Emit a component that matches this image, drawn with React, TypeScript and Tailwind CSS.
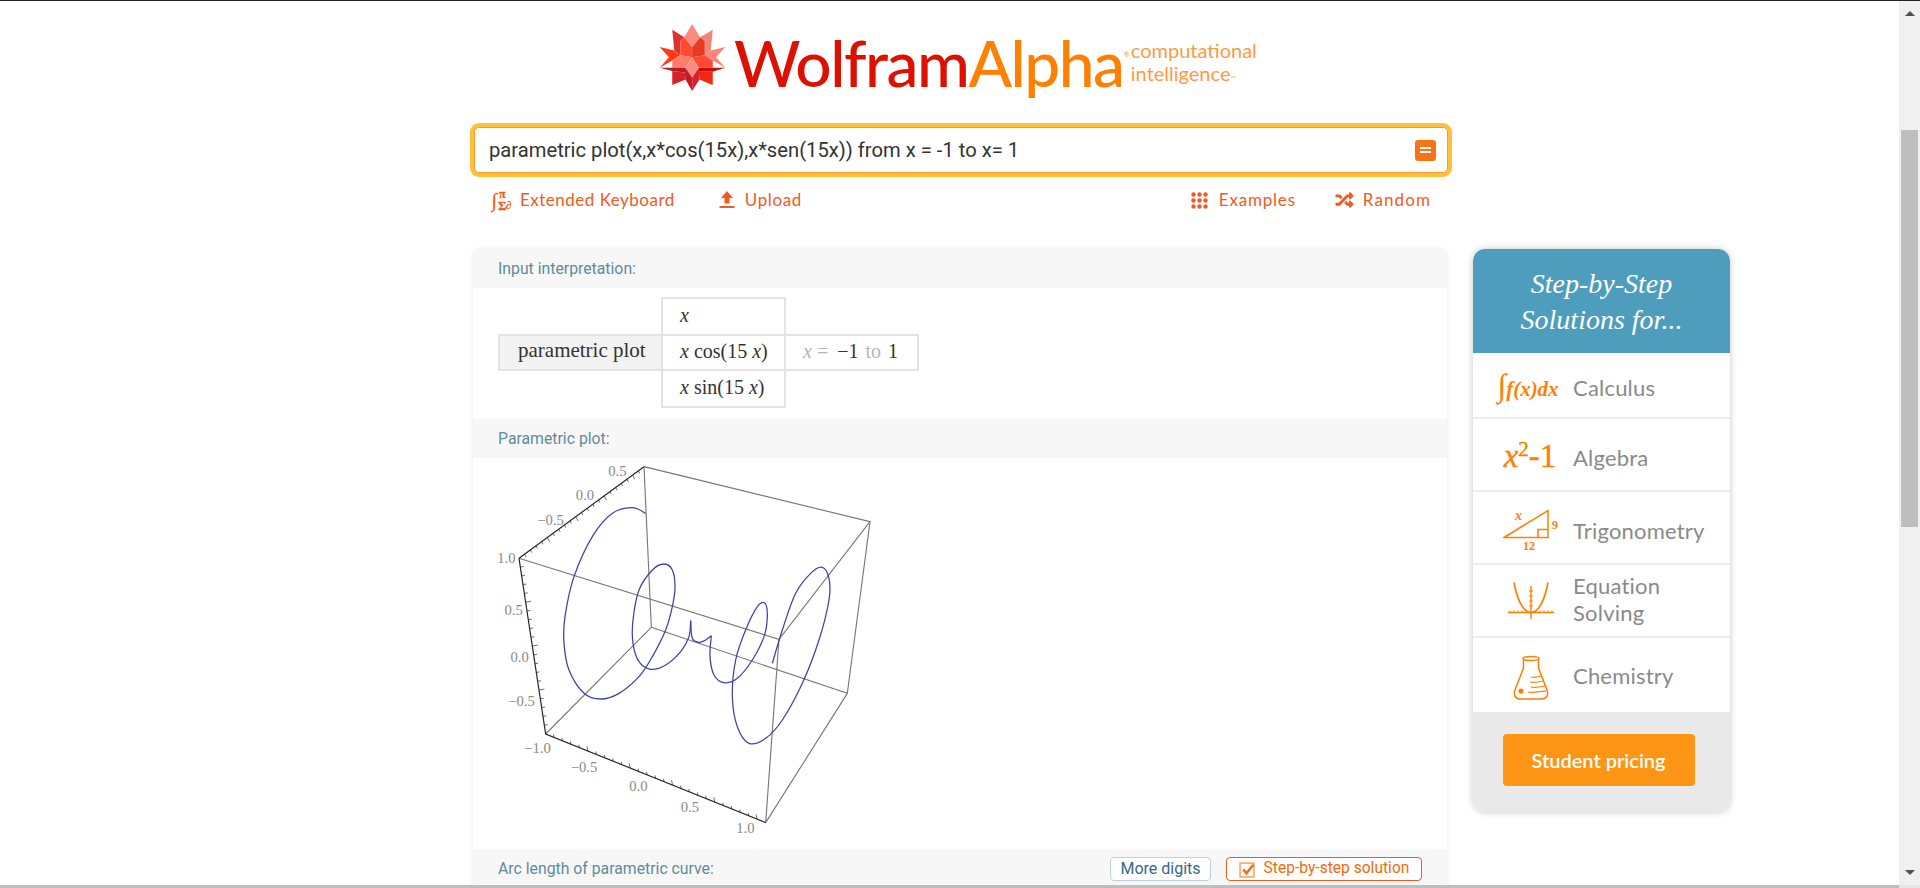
import { FaRandom } from 'react-icons/fa';

const sans = 'font-["Lato",sans-serif]';

// curve traced from the plot, one list per smooth stretch between cusps
const curveParts: number[][][] = [
  [[470,190],[430,173],[370,190],[310,260],[255,380],[228,500],[225,580],[240,660],[285,730],[335,747],[390,730],[450,680],[490,620],[530,540],[550,470],[558,410],[550,360],[525,342],[490,360],[450,420],[432,510],[432,580],[450,635],[485,658],[530,645],[575,605],[600,560],[605,512]],
  [[605,512],[610,565],[630,577],[650,570],[667,557]],
  [[667,557],[663,620],[675,675],[705,698],[745,685],[790,630],[825,560],[835,500],[828,460],[805,470],[770,540],[740,630],[730,740],[745,830],[780,880],[830,865],[880,810],[940,700],[990,570],[1020,450],[1020,385],[1000,352],[965,370],[920,430],[880,540],[850,640]],
];

function smoothPath(pts: number[][]) {
  let d = `M${pts[0][0]} ${pts[0][1]}`;
  for (let i = 0; i < pts.length - 1; i++) {
    const p0 = pts[Math.max(i - 1, 0)];
    const p1 = pts[i];
    const p2 = pts[i + 1];
    const p3 = pts[Math.min(i + 2, pts.length - 1)];
    const c1x = p1[0] + (p2[0] - p0[0]) / 6;
    const c1y = p1[1] + (p2[1] - p0[1]) / 6;
    const c2x = p2[0] - (p3[0] - p1[0]) / 6;
    const c2y = p2[1] - (p3[1] - p1[1]) / 6;
    d += ` C${c1x} ${c1y} ${c2x} ${c2y} ${p2[0]} ${p2[1]}`;
  }
  return d;
}

function ticks(a: number[], b: number[], n: number, dx: number, dy: number) {
  let d = '';
  for (let i = 1; i < n; i++) {
    const x = a[0] + ((b[0] - a[0]) * i) / n;
    const y = a[1] + ((b[1] - a[1]) * i) / n;
    const l = i % 5 === 0 ? 1.6 : 1;
    d += `M${x} ${y} l${dx * l} ${dy * l} `;
  }
  return d;
}

const plotLabels = [
  { x: 385, y: 78, t: '0.5' }, { x: 288, y: 150, t: '0.0' }, { x: 185, y: 224, t: '−0.5' },
  { x: 52, y: 338, t: '1.0' }, { x: 74, y: 494, t: '0.5' }, { x: 92, y: 637, t: '0.0' },
  { x: 98, y: 768, t: '−0.5' }, { x: 146, y: 910, t: '−1.0' }, { x: 285, y: 966, t: '−0.5' },
  { x: 448, y: 1023, t: '0.0' }, { x: 603, y: 1086, t: '0.5' }, { x: 769, y: 1150, t: '1.0' },
];

function ParametricPlot() {
  return (
    <svg viewBox="0 24 1200 1173" className="ml-[16px] block h-[391px] w-[400px]">
      <g fill="none" stroke="#777" strokeWidth="3.4">
        <path d="M465 50 L1143 215 L870 568 L90 325" />
        <path d="M465 50 L487 532 L170 852 M487 532 L1075 730 L1143 215 M1075 730 L830 1118 L870 568" />
      </g>
      <g fill="none" stroke="#222" strokeWidth="3.5">
        <path d="M90 325 L465 50 M90 325 L170 852 L830 1118" />
        <path strokeWidth="2" d={ticks([90,325],[465,50],22,4,8) + ticks([90,325],[170,852],20,10,-2) + ticks([170,852],[830,1118],26,-2,-9)} />
      </g>
      <g fill="none" stroke="#3f42a8" strokeWidth="3.8" strokeLinejoin="miter">
        {curveParts.map((pts, i) => <path key={i} d={smoothPath(pts)} />)}
      </g>
      <g fill="#888" fontFamily="'Liberation Serif',serif" fontSize="44" textAnchor="middle">
        {plotLabels.map(l => <text key={l.x} x={l.x} y={l.y}>{l.t}</text>)}
      </g>
    </svg>
  );
}

function WolframStar() {
  return (
    <svg viewBox="25 25 208 208" className="h-[69px] w-[69px] shrink-0">
      <polygon points="128,28 152,68 128,98 104,68" fill="#fb8d7f" />
      <polygon points="68,45 104,68 92,80 92,122 74,108" fill="#dc352f" />
      <polygon points="190,45 152,68 166,80 166,122 184,108" fill="#f0857a" />
      <polygon points="104,68 128,98 128,128 92,122 92,80" fill="#ff4c30" />
      <polygon points="152,68 128,98 128,128 166,122 166,80" fill="#e63a22" />
      <polygon points="30,97 74,108 92,122 68,138 30,160 58,128" fill="#ff3a14" />
      <polygon points="228,97 184,108 166,122 190,138 228,160 200,128" fill="#fb8778" />
      <polygon points="92,122 128,128 108,160 68,160 68,138" fill="#fb7d6c" />
      <polygon points="166,122 128,128 148,160 190,160 190,138" fill="#ff4a35" />
      <polygon points="128,128 148,160 128,190 108,160" fill="#fb8d7f" />
      <polygon points="30,160 108,160 110,175 68,170" fill="#b81c1f" />
      <polygon points="228,160 148,160 148,172 190,172" fill="#c90f08" />
      <polygon points="68,170 110,175 108,195 68,212" fill="#d8222a" />
      <polygon points="190,172 148,172 150,195 190,212" fill="#f02a0e" />
      <polygon points="108,160 128,190 128,230 108,195" fill="#c31a25" />
      <polygon points="148,160 128,190 128,230 150,195" fill="#d92030" />
    </svg>
  );
}

function KeyboardIcon() {
  return (
    <svg viewBox="0 -4 24 30" className="h-[30px] w-[24px] -mr-[3px]" fill="#f15a22" stroke="#f15a22" strokeWidth="0.3" fontFamily="'Liberation Serif',serif" fontWeight="700">
      <text x="0.5" y="18" fontSize="20">∫</text>
      <text x="8" y="9" fontSize="12">π</text>
      <text x="7" y="21" fontSize="13">Σ</text>
      <text x="15" y="20" fontSize="11">∂</text>
    </svg>
  );
}

function UploadIcon() {
  return (
    <svg viewBox="0 0 16 18" className="h-[18px] w-[16px]" fill="#f15a22">
      <path d="M8 0 L14 7 H10.5 V12.5 H5.5 V7 H2 Z" />
      <rect x="0.5" y="15" width="15" height="2" />
    </svg>
  );
}

function DotsIcon() {
  const dots = [2.5, 8.5, 14.5];
  return (
    <svg viewBox="0 0 17 17" className="h-[17px] w-[17px]" fill="#f15a22">
      {dots.map(y => dots.map(x => <circle key={`${x}-${y}`} cx={x} cy={y} r="2.2" />))}
    </svg>
  );
}

function ToolLink({ icon, label, extra }: { icon: React.ReactNode; label: string; extra: string }) {
  return (
    <a className={`flex items-center ${extra} ${sans} text-[17px] text-[#f15a22]`}>
      {icon}
      <span>{label}</span>
    </a>
  );
}

function PodHeader({ title, children }: { title: string; children?: React.ReactNode }) {
  return (
    <div className="flex items-center justify-between bg-[#f7f7f7] pr-[25px] pl-[25px] font-['Roboto',sans-serif] text-[15.8px] text-[#5f8b9d]">
      <span>{title}</span>
      {children}
    </div>
  );
}

function InputTable() {
  const serif = "font-['Liberation_Serif',serif] text-[20px] text-[#333]";
  const line = 'border-2 border-[#e3e3e3]';
  return (
    <div className={`ml-[25px] grid h-[111px] w-[421px] grid-cols-[163px_125px_133px] grid-rows-[37px_37px_37px] ${serif}`}>
      <div className={`col-start-2 row-start-1 flex items-center ${line} border-b-0 pb-[4px] pl-[17px]`}><i>x</i></div>
      <div className={`col-start-1 row-start-2 flex items-center ${line} border-r-0 bg-[#f2f2f2] pb-[3px] pl-[18px] text-[21px] whitespace-nowrap`}>parametric plot</div>
      <div className={`col-start-2 row-start-2 flex items-center ${line} bg-white pb-[3px] pl-[17px] whitespace-nowrap`}><i>x</i>&nbsp;cos(15&nbsp;<i>x</i>)</div>
      <div className={`col-start-3 row-start-2 flex items-center ${line} border-l-0 pb-[3px] pl-[17px] whitespace-nowrap`}>
        <span className="mr-[9px] text-[#b5b5b5]"><i>x</i>&nbsp;=</span>−1<span className="mx-[7px] text-[#b5b5b5]">to</span>1
      </div>
      <div className={`col-start-2 row-start-3 flex items-center ${line} border-t-0 pb-[3px] pl-[17px] whitespace-nowrap`}><i>x</i>&nbsp;sin(15&nbsp;<i>x</i>)</div>
    </div>
  );
}

const topics = [
  {
    h: 'h-[66px]',
    label: 'Calculus',
    pad: 'pt-[5px]',
    icon: <span className="ml-[6px] font-['Liberation_Serif',serif] text-[21px] font-bold text-[#ff7f00] italic whitespace-nowrap"><span className="text-[32px] font-normal">∫</span>f(x)dx</span>,
  },
  {
    h: 'h-[73px]',
    label: 'Algebra',
    pad: 'pt-[5px]',
    icon: <span className="mt-[3px] ml-[10px] font-['Liberation_Serif',serif] text-[33px] leading-none text-[#ff7f00] [-webkit-text-stroke:0.4px_#ff7f00] whitespace-nowrap"><i>x</i><sup className="text-[21px]">2</sup>-1</span>,
  },
  {
    h: 'h-[73px]',
    label: 'Trigonometry',
    pad: 'pt-[5px]',
    icon: (
      <svg viewBox="0 0 60 48" className="ml-[15px] h-[48px] w-[60px] shrink-0">
        <path d="M1 33.5 L45 6.5 V33.5 Z M35 25.5 H45 V33.5 H35 Z" fill="none" stroke="#ff7f00" strokeWidth="1.5" />
        <g fill="#ff7f00" fontFamily="'Liberation Serif',serif" fontWeight="700">
          <text x="12" y="16" fontSize="14" fontStyle="italic">x</text>
          <text x="49" y="25" fontSize="12">9</text>
          <text x="20" y="46" fontSize="12">12</text>
        </g>
      </svg>
    ),
  },
  {
    h: 'h-[73px]',
    label: 'Equation Solving',
    pad: 'pb-[4px]',
    icon: (
      <svg viewBox="0 0 46 40" className="ml-[11px] h-[40px] w-[46px] shrink-0" fill="none" stroke="#ff7f00">
        <path d="M6 1.5 C9 18 15 31.5 23 31.5 C31 31.5 37 18 40 1.5" strokeWidth="1.7" />
        <path d="M0 31.5 H46 M23 5 V38" strokeWidth="1.4" />
        <path d="M2 29.5 V31 M6 29.5 V31 M10 29.5 V31 M14 29.5 V31 M18 29.5 V31 M28 29.5 V31 M32 29.5 V31 M36 29.5 V31 M40 29.5 V31 M44 29.5 V31 M21 10 H25 M21 15 H25 M21 20 H25 M21 25 H25" strokeWidth="1" />
      </svg>
    ),
  },
  {
    h: 'h-[74px]',
    label: 'Chemistry',
    pad: '',
    icon: (
      <svg viewBox="0 0 36 46" className="mt-[5px] ml-[11px] h-[46px] w-[36px] shrink-0" fill="none" stroke="#ff7f00" strokeWidth="1.5">
        <ellipse cx="18" cy="3.5" rx="8" ry="2" />
        <path d="M10.5 4 V13 L2 35 C0 41 3 44 8 44 H28 C33 44 36 41 34 35 L25.5 13 V4" />
        <path d="M18 22 C22 23 25 22 28 21 M17 27 C22 28 26 27 30 26 M18 32 C23 33 27 32 32 31 M15 37 C20 38 26 37 33 36" strokeWidth="1.2" />
        <circle cx="8" cy="36" r="1.8" fill="#ff7f00" />
      </svg>
    ),
  },
];

function Sidebar() {
  return (
    <aside className="ml-[26px] flex h-[563px] w-[257px] shrink-0 flex-col overflow-hidden rounded-xl shadow-[0_0_7px_rgba(0,0,0,0.22)]">
      <div className="flex h-[104px] shrink-0 items-center justify-center bg-[#4f9dbd] pt-[2px] text-center font-['Liberation_Serif',serif] text-[28px] leading-[36px] text-white italic">
        <div>Step-by-Step<br />Solutions for...</div>
      </div>
      {topics.map((t, i) => (
        <div key={t.label} className={`flex ${t.h} shrink-0 items-center bg-white ${i < topics.length - 1 ? 'border-b-2 border-[#ececec]' : ''}`}>
          <div className="flex w-[100px] shrink-0 justify-center pl-[4px]">{t.icon}</div>
          <span className={`${sans} ${t.pad} w-[130px] text-[22px] leading-[27px] tracking-[0.2px] text-[#8a8a8a]`}>{t.label}</span>
        </div>
      ))}
      <div className="flex flex-1 items-start justify-center bg-[#e9e9e9] pt-[22px] pr-[6px]">
        <button className={`h-[52px] w-[192px] rounded-[4px] bg-[#ff9515] ${sans} text-[20px] font-semibold text-white`}>Student pricing</button>
      </div>
    </aside>
  );
}

export default function App() {
  return (
    <div className="flex h-[888px] w-[1920px] flex-col overflow-hidden border-t border-[#222] bg-white">
      <div className="flex min-h-0 flex-1">
        <main className="min-w-0 flex-1 overflow-hidden pl-[470px]">
          <div className="flex h-[122px] w-[982px] items-start pl-[188px] pt-[22px]">
            <WolframStar />
            <div className={`ml-[7px] pt-[2px] ${sans} text-[64px] font-medium leading-[76px] tracking-[-1.5px] whitespace-nowrap`}>
              <span className="text-[#dd1100]">Wolfram</span><span className="text-[#ff7f00]">Alpha</span>
              <span className="align-[30px] text-[7px] leading-none text-[#ff9a45]">®</span>
            </div>
            <div className={`ml-[3px] mt-[16px] ${sans} text-[20px] leading-[23px] text-[#ff9a45]`}>
              computational<br />intelligence<span className="text-[7px]">™</span>
            </div>
          </div>

          <div className="w-[982px] rounded-[9px] bg-[#ffc13b] p-[4px]">
            <div className="flex h-[46px] items-center justify-between rounded-[5px] border border-[#ff9a2e] bg-white pr-[11px] pl-[14px]">
              <span className="font-['Roboto',sans-serif] text-[20.2px] text-[#333]">parametric plot(x,x*cos(15x),x*sen(15x)) from x = -1 to x= 1</span>
              <div className="flex h-[21px] w-[21px] flex-col items-center justify-center gap-[2px] rounded-[3px] bg-[#f97316]">
                <i className="block h-[2px] w-[11px] bg-white" />
                <i className="block h-[2px] w-[11px] bg-white" />
              </div>
            </div>
          </div>

          <div className="flex h-[46px] w-[982px] items-center justify-between pr-[21px] pl-[21px]">
            <div className="flex items-center gap-[44px]">
              <ToolLink icon={<KeyboardIcon />} label="Extended Keyboard" extra="gap-[8px] tracking-[0.5px]" />
              <ToolLink icon={<UploadIcon />} label="Upload" extra="gap-[10px] tracking-[0.6px]" />
            </div>
            <div className="flex items-center gap-[39px]">
              <ToolLink icon={<DotsIcon />} label="Examples" extra="gap-[11px] tracking-[0.8px]" />
              <ToolLink icon={<FaRandom className="h-[18px] w-[19px]" />} label="Random" extra="gap-[9px] tracking-[1.1px]" />
            </div>
          </div>

          <div className="mt-[26px] ml-[3px] flex items-start">
            <section className="w-[974px] shrink-0 overflow-hidden rounded-t-md bg-white shadow-[0_0_4px_rgba(0,0,0,0.1)]">
              <div className="flex h-[39px] flex-col justify-center bg-[#f7f7f7]"><PodHeader title="Input interpretation:" /></div>
              <div className="h-[131px] pt-[9px]"><InputTable /></div>
              <div className="flex h-[39px] flex-col justify-center bg-[#f7f7f7]"><PodHeader title="Parametric plot:" /></div>
              <ParametricPlot />
              <div className="flex h-[40px] items-center bg-[#f7f7f7]">
                <div className="flex-1">
                  <PodHeader title="Arc length of parametric curve:">
                    <div className="flex items-center gap-[15px]">
                      <button className="flex h-[24px] w-[101px] items-center justify-center rounded-[4px] border border-[#b9d4df] bg-white text-[16px] text-[#336b85]">More digits</button>
                      <button className="flex h-[24px] w-[196px] items-center justify-center gap-[8px] rounded-[4px] border border-[#f15a22] bg-white text-[15.6px] text-[#f46a0c]">
                        <svg viewBox="0 0 16 16" className="h-[17px] w-[17px]" fill="none">
                          <rect x="1" y="2" width="13" height="13" stroke="#f9a66c" strokeWidth="1.5" />
                          <path d="M4 8 L7 11.5 L13.5 3.5" stroke="#f46a0c" strokeWidth="2.4" />
                        </svg>
                        Step-by-step solution
                      </button>
                    </div>
                  </PodHeader>
                </div>
              </div>
            </section>
            <Sidebar />
          </div>
        </main>

        <div className="flex w-[21px] shrink-0 flex-col items-center bg-[#f0f0f0] px-[2px]">
          <svg viewBox="0 0 10 5" className="mt-[10px] h-[5px] w-[10px]" fill="#505050"><path d="M0 5 L5 0 L10 5Z" /></svg>
          <div className="mt-[114px] h-[397px] w-full bg-[#bebebe]" />
          <svg viewBox="0 0 10 5" className="mt-auto mb-[10px] h-[5px] w-[10px]" fill="#505050"><path d="M0 0 L5 5 L10 0Z" /></svg>
        </div>
      </div>
      <div className="flex h-[3px] shrink-0">
        <div className="flex-1 bg-[#bebebe]" />
        <div className="w-[21px] bg-[#e6e6e6]" />
      </div>
    </div>
  );
}
